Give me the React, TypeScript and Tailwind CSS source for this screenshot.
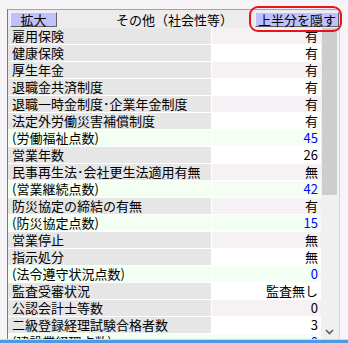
import React from "react";

type Row = { label: string; value: string; point?: boolean };

const rows: Row[] = [
    { label: "雇用保険", value: "有" },
    { label: "健康保険", value: "有" },
    { label: "厚生年金", value: "有" },
    { label: "退職金共済制度", value: "有" },
    { label: "退職一時金制度･企業年金制度", value: "有" },
    { label: "法定外労働災害補償制度", value: "有" },
    { label: "(労働福祉点数)", value: "45", point: true },
    { label: "営業年数", value: "26" },
    { label: "民事再生法･会社更生法適用有無", value: "無" },
    { label: "(営業継続点数)", value: "42", point: true },
    { label: "防災協定の締結の有無", value: "有" },
    { label: "(防災協定点数)", value: "15", point: true },
    { label: "営業停止", value: "無" },
    { label: "指示処分", value: "無" },
    { label: "(法令遵守状況点数)", value: "0", point: true },
    { label: "監査受審状況", value: "監査無し" },
    { label: "公認会計士等数", value: "0" },
    { label: "二級登録経理試験合格者数", value: "3" },
    { label: "(建設業経理点数)", value: "0", point: true },
];

function valueBg(r: Row, i: number) {
    if (r.point) return "bg-[#f3fff3]";
    return i % 2 === 0 ? "bg-[#f5f1f5]" : "bg-white";
}

export default function App() {
    return (
        <div className="relative w-[348px] h-[343px] overflow-hidden bg-[#f6f4f6] font-['Noto_Sans_CJK_JP',sans-serif] text-[13px] leading-[16px] text-black">
            <div className="ml-[7px] mt-[9px] w-[333px] h-[330px] border-l border-t border-l-[#7a7a7a] border-t-[#a4a4a4] border-r border-r-[#d6d6d6] flex flex-col">
                {/* header */}
                <div className="h-[18px] grid grid-cols-[1fr_auto_1fr] items-start bg-[#ececec] pl-[2px] pt-[2px]">
                    <div>
                        <button className="w-[47px] h-[15px] bg-[#c0c0fc] border-t border-l border-t-[#eeeeff] border-l-[#eeeeff] border-r border-b border-r-[#606060] border-b-[#606060] text-[13px] leading-[13px] text-center">
                            拡大
                        </button>
                    </div>
                    <div className="text-center leading-[15px]">その他（社会性等）</div>
                    <div className="flex justify-end">
                        <button className="w-[84px] h-[15px] bg-[#c0c0fc] border-t border-l border-t-[#eeeeff] border-l-[#eeeeff] border-r border-b border-r-[#606060] border-b-[#606060] text-[13px] leading-[13px] text-center">
                            上半分を隠す
                        </button>
                    </div>
                </div>

                {/* body */}
                <div className="flex h-[311px] overflow-hidden">
                    <div className="w-[313px] flex flex-col">
                        {rows.map((r, i) => (
                            <div key={i} className="flex shrink-0 h-[17px] border-b border-white">
                                <div className={`w-[204px] pl-[4px] whitespace-nowrap border-r border-white ${r.point ? "bg-[#f3fff3]" : "bg-[#e6e6e6]"}`}>
                                    {r.label}
                                </div>
                                <div className={`flex-1 pr-[3px] text-right ${valueBg(r, i)} ${r.point ? "text-[#0000ff]" : "text-black"}`}>
                                    {r.value}
                                </div>
                            </div>
                        ))}
                    </div>
                    <div className="w-[18px] bg-[#f0f0f0] pl-[1px] pr-[2px] flex flex-col">
                        <div className="h-[167px] bg-[#cdcdcd]" />
                        <div className="flex-1" />
                        <div className="h-[10px] mb-[2px] flex items-center justify-center">
                            <svg width="9" height="6" viewBox="0 0 9 6">
                                <path d="M1 1 L4.5 4.5 L8 1" fill="none" stroke="#606060" strokeWidth="1.6" />
                            </svg>
                        </div>
                    </div>
                </div>
            </div>

            {/* bottom bar */}
            <div className="h-[4px] border-t border-[#bfe0f8] bg-[#4a9ae6]" />

            {/* red highlight */}
            <div className="absolute left-[249px] top-[6px] w-[93px] h-[26px] border-2 border-[#e8141c] rounded-[9px]" />
        </div>
    );
}
